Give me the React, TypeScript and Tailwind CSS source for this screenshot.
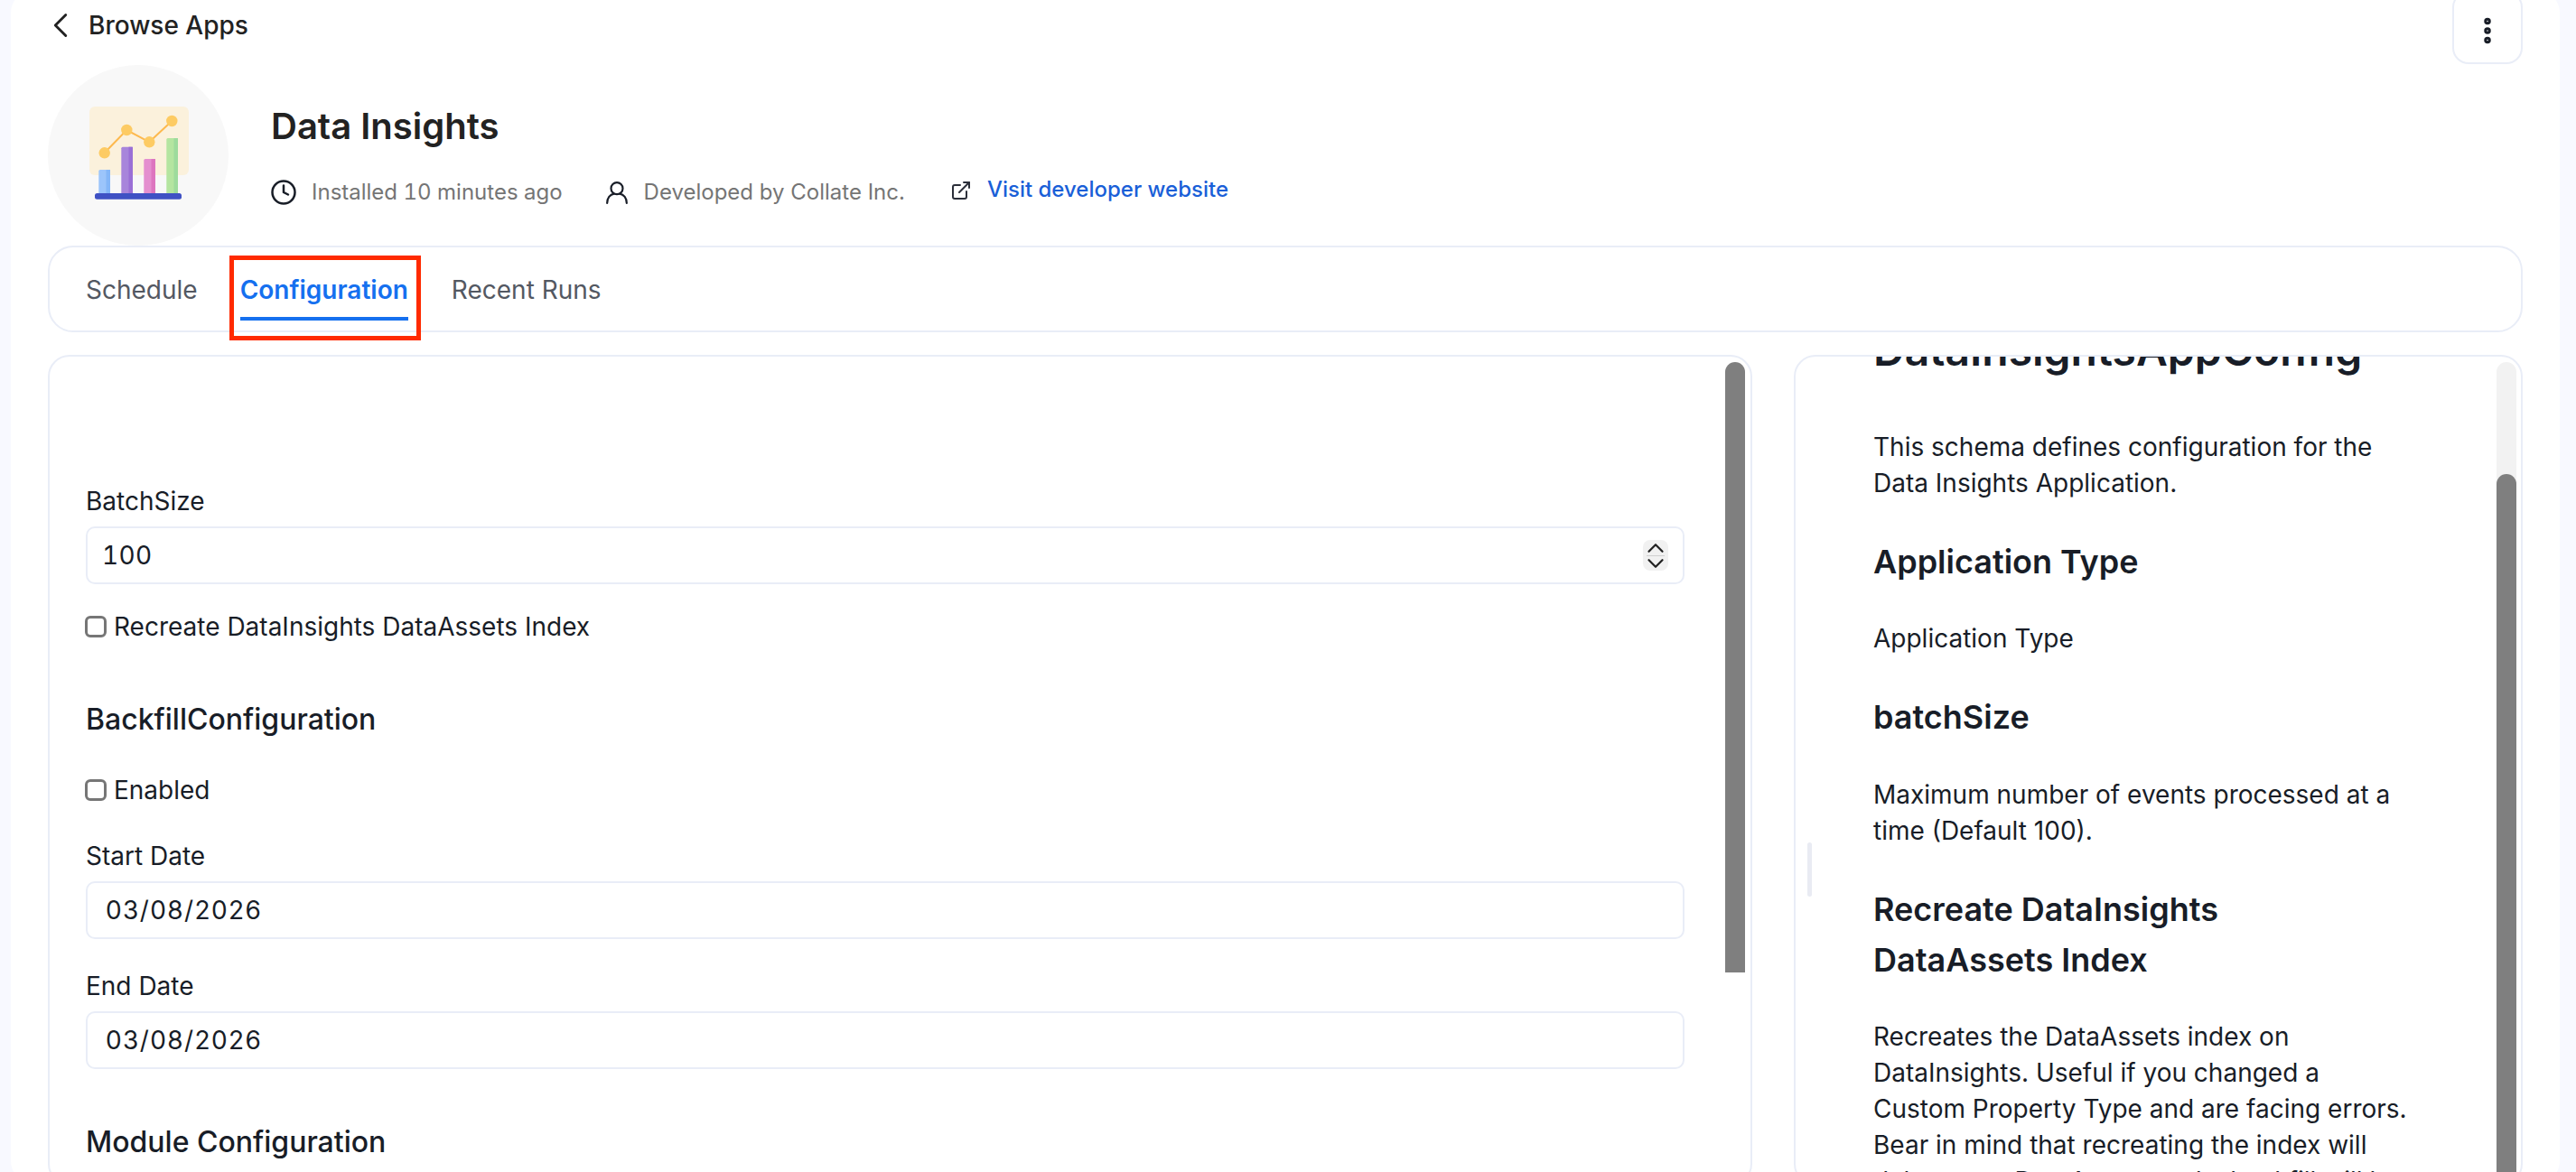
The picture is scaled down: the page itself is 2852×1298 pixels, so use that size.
import { ChevronLeft, ChevronDown, ChevronUp, Clock, ExternalLink, MoreVertical } from "lucide-react";

function AppIcon() {
  return (
    <div className="w-[200px] h-[200px] shrink-0 rounded-full bg-[#f8f8f8]">
      <svg viewBox="0 0 200 200" className="w-full h-full">
        <rect x="46" y="46" width="110" height="76" rx="6" fill="#fbf1dc" />
        <rect x="56.3" y="116" width="12.7" height="27" rx="1.5" fill="#9cc5fb" />
        <rect x="64.5" y="116" width="4.5" height="27" fill="#84b6f8" />
        <rect x="81.3" y="90.7" width="12.7" height="52" rx="1.5" fill="#a885db" />
        <rect x="89.5" y="90.7" width="4.5" height="52" fill="#9a6fd6" />
        <rect x="106.3" y="104" width="12.7" height="39" rx="1.5" fill="#e48fcf" />
        <rect x="114.5" y="104" width="4.5" height="39" fill="#dd76bf" />
        <rect x="131.3" y="81" width="12.7" height="62" rx="1.5" fill="#b4e5a0" />
        <rect x="139.5" y="81" width="4.5" height="62" fill="#9ddb9c" />
        <rect x="52" y="142" width="96" height="6.7" rx="2.5" fill="#3f51c4" />
        <polyline points="62.7,97.3 87.3,72 112.3,85.3 137.3,62" fill="none" stroke="#fdb94e" strokeWidth="2" />
        <circle cx="62.7" cy="97.3" r="6.2" fill="#fdcb63" />
        <circle cx="87.3" cy="72" r="6.2" fill="#fdcb63" />
        <circle cx="112.3" cy="85.3" r="6.2" fill="#fdcb63" />
        <circle cx="137.3" cy="62" r="6.2" fill="#fdcb63" />
      </svg>
    </div>
  );
}

function Checkbox({ label }: { label: string }) {
  return (
    <div className="flex items-center gap-[8px] h-[24px] -ml-px text-[28px] text-[#181d27]">
      <span className="w-[24px] h-[24px] rounded-[6px] border-[3px] border-[#767676] bg-white" />
      <span>{label}</span>
    </div>
  );
}

function Field({ label, value, spaced, spinner }: { label: string; value: string; spaced?: boolean; spinner?: boolean }) {
  return (
    <div>
      <div className="text-[28px] leading-[40px] text-[#181d27]">{label}</div>
      <div className={`mt-[8px] h-[64px] flex items-center justify-between rounded-[10px] border-2 border-[#e9edf7] text-[28px] text-[#181d27] ${spaced ? "pl-[20px] tracking-[1.4px]" : "pl-[16px] tabular-nums tracking-[0.3px]"} pr-[16px]`}>
        <span>{value}</span>
        {spinner && (
          <span className="w-[28px] h-[34px] rounded-[8px] bg-[#f1f1f1] flex flex-col items-center justify-center text-[#222]">
            <ChevronUp size={30} strokeWidth={1.8} className="-my-[7px]" />
            <span className="w-[20px] h-px bg-[#d0d0d0] shrink-0" />
            <ChevronDown size={30} strokeWidth={1.8} className="-my-[7px]" />
          </span>
        )}
      </div>
    </div>
  );
}

export default function App() {
  return (
    <div className="h-screen overflow-hidden bg-[#f8f9ff] pl-[12px] pr-[18px]" style={{ fontFamily: "Inter, sans-serif" }}>
      <div className="-mt-[10px] h-[1320px] rounded-[24px] bg-white px-[41px]">
        <div className="flex justify-between items-start h-[82px]">
          <div className="flex items-center pt-[15px] text-[28px] leading-[32px] font-medium text-[#222]">
            <ChevronLeft size={46} strokeWidth={1.5} className="-ml-[9px] text-[#222]" />
            <span className="ml-[8px]">Browse Apps</span>
          </div>
          <div className="w-[78px] h-[81px] rounded-[18px] border-2 border-[#e9edf7] flex items-center justify-center pt-[6px] text-[#181d27]">
            <MoreVertical size={36} strokeWidth={3} />
          </div>
        </div>

        <div className="flex items-start">
          <AppIcon />
          <div className="ml-[47px] flex-1">
            <div className="mt-[44px] text-[40px] leading-[48px] font-semibold text-[#222]">Data Insights</div>
            <div className="mt-[35px] flex items-center h-[28px] text-[24px] text-[#757575]">
              <Clock size={30} strokeWidth={2} className="text-[#181d27] -ml-px" />
              <span className="ml-[16px] tabular-nums">Installed 10 minutes ago</span>
              <svg viewBox="0 0 24 24" className="w-[26px] h-[26px] ml-[47px] text-[#181d27]" fill="none" stroke="currentColor" strokeWidth="2" strokeLinecap="round">
                <circle cx="12" cy="8" r="6" />
                <path d="M2 23c0-5 3-9 7-9.500M22 23c0-5-3-9-7-9.500" />
              </svg>
              <span className="ml-[17px]">Developed by Collate Inc.</span>
              <ExternalLink size={24} strokeWidth={2} className="ml-[50px] -mt-[4px] text-[#2b2f3a]" />
              <span className="ml-[17px] -mt-[6px] font-medium text-[#1a5fd8]">Visit developer website</span>
            </div>
          </div>
        </div>

        <div className="relative h-[96px] rounded-[28px] border-2 border-[#e9edf7] flex items-center pl-[40px] pt-[2px] text-[28px] text-[#535862]">
          <span>Schedule</span>
          <span className="relative ml-[47px] font-semibold text-[#1570ef]">
            Configuration
            <span className="absolute left-0 right-0 top-[51px] h-[4px] bg-[#1570ef]" />
            <span className="absolute -left-[12px] -right-[14px] -top-[17px] h-[94px] border-[5px] border-[#ff2a00]" />
          </span>
          <span className="ml-[48px]">Recent Runs</span>
        </div>

        <div className="mt-[25px] flex gap-[46px]">
          <div className="relative w-[1887px] h-[920px] rounded-[24px] border-2 border-[#e9edf7] overflow-hidden pl-[40px] pr-[73px] pt-[140px]">
            <Field label="BatchSize" value="100" spinner />
            <div className="mt-[35px]">
              <Checkbox label="Recreate DataInsights DataAssets Index" />
            </div>
            <div className="mt-[71px] text-[32px] leading-[40px] font-medium text-[#181d27]">BackfillConfiguration</div>
            <div className="mt-[46px]">
              <Checkbox label="Enabled" />
            </div>
            <div className="mt-[41px]">
              <Field label="Start Date" value="03/08/2026" spaced />
            </div>
            <div className="mt-[32px]">
              <Field label="End Date" value="03/08/2026" spaced />
            </div>
            <div className="mt-[61px] text-[32px] leading-[40px] font-medium text-[#181d27]">Module Configuration</div>
            <div className="absolute right-[6px] top-[6px] w-[22px] h-[676px] rounded-t-[11px] bg-[#7f7f7f]" />
          </div>

          <div className="relative flex-1 h-[920px] rounded-[24px] border-2 border-[#e9edf7] overflow-hidden pl-[86px] pr-[121px] text-[#181d27]">
            <div className="-mt-[43px] text-[48px] leading-[72px] font-semibold">DataInsightsAppConfig</div>
            <p className="mt-[51px] text-[28px] leading-[40px]">This schema defines configuration for the Data Insights Application.</p>
            <h2 className="mt-[39px] text-[36px] leading-[56px] font-semibold">Application Type</h2>
            <p className="mt-[37px] text-[28px] leading-[40px]">Application Type</p>
            <h2 className="mt-[39px] text-[36px] leading-[56px] font-semibold">batchSize</h2>
            <p className="mt-[38px] text-[28px] leading-[40px]">Maximum number of events processed at a time (Default 100).</p>
            <h2 className="mt-[39px] max-w-[500px] text-[36px] leading-[56px] font-semibold">Recreate DataInsights DataAssets Index</h2>
            <p className="mt-[37px] text-[28px] leading-[40px]">Recreates the DataAssets index on DataInsights. Useful if you changed a Custom Property Type and are facing errors. Bear in mind that recreating the index will delete your DataAssets and a backfill will be needed.</p>
            <div className="absolute right-[5px] top-[6px] bottom-0 w-[22px] rounded-t-[11px] bg-[#f2f2f2]">
              <div className="absolute inset-x-0 top-[124px] bottom-0 rounded-t-[11px] bg-[#7f7f7f]" />
            </div>
            <div className="absolute left-[13px] top-[538px] w-[5px] h-[60px] rounded-full bg-[#e9ebf3]" />
          </div>
        </div>
      </div>
    </div>
  );
}
